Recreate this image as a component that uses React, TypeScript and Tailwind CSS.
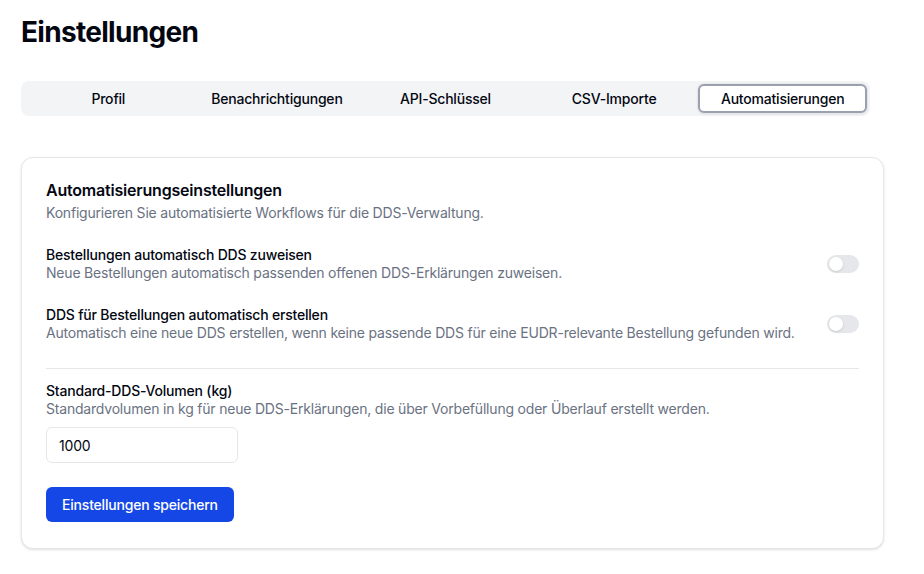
import { useState } from 'react'

const tabs = ['Profil', 'Benachrichtigungen', 'API-Schlüssel', 'CSV-Importe', 'Automatisierungen']

const Toggle = ({ on, onChange }: { on: boolean; onChange: () => void }) => (
  <button
    type="button"
    onClick={onChange}
    className={`relative h-[18px] w-8 shrink-0 rounded-full transition-colors ${on ? 'bg-blue-700' : 'bg-gray-200'}`}
  >
    <span
      className={`absolute top-[2px] h-[14px] w-[14px] rounded-full bg-white shadow-sm transition-all ${on ? 'left-[16px]' : 'left-[2px]'}`}
    />
  </button>
)

export default function App() {
  const [active] = useState('Automatisierungen')
  const [assign, setAssign] = useState(false)
  const [create, setCreate] = useState(false)
  const [volume, setVolume] = useState('1000')

  return (
    <div className="min-h-screen bg-white px-[21px] pt-[14px] text-gray-950 tracking-[-0.2px] font-['Inter',sans-serif]">
      <h1 className="text-[28px] font-bold leading-9 tracking-tight">Einstellungen</h1>

      <div className="mt-[31px] grid w-[849px] grid-cols-5 rounded-lg bg-gray-100 p-[3px]">
        {tabs.map((tab) => (
          <button
            key={tab}
            className={`h-[29px] rounded-md text-sm font-medium ${
              tab === active ? 'border-2 border-gray-400 bg-white shadow-sm ring-1 ring-gray-200' : 'text-gray-950'
            }`}
          >
            {tab}
          </button>
        ))}
      </div>

      <div className="mt-[41px] w-[863px] rounded-xl border border-gray-200 bg-white px-6 pt-5 pb-[26px] shadow-sm">
        <h2 className="text-base font-semibold leading-6">Automatisierungseinstellungen</h2>
        <p className="mt-px text-sm leading-5 text-gray-500">
          Konfigurieren Sie automatisierte Workflows für die DDS-Verwaltung.
        </p>

        <div className="mt-[23px] flex items-center justify-between">
          <div>
            <div className="text-sm font-medium leading-[18px]">Bestellungen automatisch DDS zuweisen</div>
            <div className="text-sm leading-[18px] text-gray-500">
              Neue Bestellungen automatisch passenden offenen DDS-Erklärungen zuweisen.
            </div>
          </div>
          <Toggle on={assign} onChange={() => setAssign(!assign)} />
        </div>

        <div className="mt-6 flex items-center justify-between">
          <div>
            <div className="text-sm font-medium leading-[18px]">DDS für Bestellungen automatisch erstellen</div>
            <div className="text-sm leading-[18px] text-gray-500">
              Automatisch eine neue DDS erstellen, wenn keine passende DDS für eine EUDR-relevante Bestellung gefunden wird.
            </div>
          </div>
          <Toggle on={create} onChange={() => setCreate(!create)} />
        </div>

        <div className="mt-[26px] border-t border-gray-200" />

        <div className="mt-[13px]">
          <div className="text-sm font-medium leading-[18px]">Standard-DDS-Volumen (kg)</div>
          <div className="text-sm leading-[18px] text-gray-500">
            Standardvolumen in kg für neue DDS-Erklärungen, die über Vorbefüllung oder Überlauf erstellt werden.
          </div>
          <input
            value={volume}
            onChange={(e) => setVolume(e.target.value)}
            className="mt-[9px] h-9 w-48 rounded-md border border-gray-200 px-3 text-sm outline-none"
          />
        </div>

        <button className="mt-6 block h-[35px] rounded-md bg-blue-700 px-4 text-sm font-medium text-white">
          Einstellungen speichern
        </button>
      </div>
    </div>
  )
}
